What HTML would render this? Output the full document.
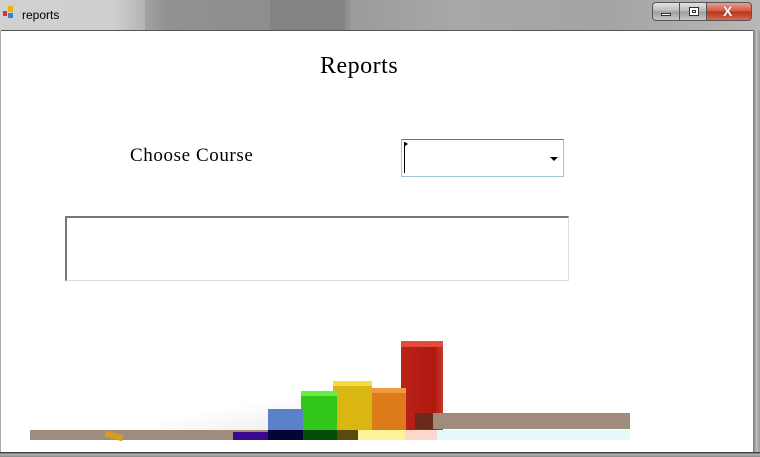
<!DOCTYPE html>
<html><head><meta charset="utf-8"><style>
*{margin:0;padding:0;box-sizing:border-box}
body{width:760px;height:457px;overflow:hidden;position:relative;background:#a9a9a9;font-family:"Liberation Sans",sans-serif}
.tb{position:absolute;left:0;top:0;width:760px;height:31px;background:linear-gradient(90deg,#d0d0d0 0%,#cfcfcf 15%,#a0a0a0 22%,#9a9a9a 45%,#a8a8a8 60%,#a4a4a4 80%,#b8b8b8 100%)}
.ghost{position:absolute;top:0;height:30px;background:rgba(60,60,60,.15)}
.client{position:absolute;left:1px;top:30px;width:752px;height:422px;background:#fff;border-top:1px solid #555}
.frameR{position:absolute;left:753px;top:30px;width:7px;height:427px;background:linear-gradient(90deg,#777,#c0c0c0,#9a9a9a)}
.frameB{position:absolute;left:0;top:452px;width:760px;height:5px;background:linear-gradient(180deg,#444 0,#444 1px,#b5b5b5 2px,#888 5px)}
.btn{position:absolute;top:2px;height:19px;border:1px solid #555;background:linear-gradient(#e4e4e4,#b5b5b5 50%,#9d9d9d 51%,#c6c6c6)}
.abs{position:absolute}
</style></head><body>
<div class="tb"></div>
<div class="ghost" style="left:145px;width:200px"></div>
<div class="ghost" style="left:270px;width:80px;background:rgba(70,70,70,.12)"></div>
<div class="abs" style="left:3px;top:11px;width:4px;height:5px;background:#d33"></div>
<div class="abs" style="left:8px;top:6px;width:5px;height:6px;background:#f0b400"></div>
<div class="abs" style="left:8px;top:13px;width:5px;height:5px;background:#3a7fd5"></div>
<div class="abs" style="left:22px;top:8px;font-size:12px;color:#000">reports</div>
<div class="btn" style="left:652px;width:28px;border-radius:4px 0 0 4px"><div class="abs" style="left:8px;top:10px;width:10px;height:3px;background:#fff;border:1px solid #333"></div></div>
<div class="btn" style="left:679px;width:28px"><div class="abs" style="left:9px;top:4px;width:10px;height:9px;background:#fff;border:1px solid #333"><div style="margin:2px;height:3px;border:1px solid #333"></div></div></div>
<div class="btn" style="left:706px;width:46px;border-radius:0 4px 4px 0;background:linear-gradient(#e8a090,#d0543c 50%,#b8321c 51%,#d86a50)"><div class="abs" style="left:16px;top:0px;font-weight:bold;font-size:14px;color:#fff;text-shadow:0 0 1px #333">X</div></div>
<div class="client"></div>
<div class="frameR"></div>
<div class="frameB"></div>
<div class="abs" style="left:320px;top:53px;font-family:'Liberation Serif',serif;font-size:24px;letter-spacing:0.5px;color:#000">Reports</div>
<div class="abs" style="left:130px;top:145px;font-family:'Liberation Serif',serif;font-size:19px;letter-spacing:0.6px;color:#000">Choose Course</div>
<div class="abs" style="left:401px;top:139px;width:163px;height:38px;border:1px solid #9fc6e0;border-top-color:#4a7aa5;background:#fff">
<div class="abs" style="left:2px;top:2px;width:1px;height:31px;background:#000"></div>
<div class="abs" style="left:3px;top:2px;border-left:3px solid #000;border-top:2px solid transparent;border-bottom:2px solid transparent"></div>
<div class="abs" style="left:148px;top:17px;border-top:4px solid #000;border-left:4px solid transparent;border-right:4px solid transparent"></div>
</div>
<div class="abs" style="left:65px;top:216px;width:504px;height:65px;border:1px solid #ddd;border-top:2px solid #777;border-left:2px solid #777;background:#fff"></div>
<!-- chart -->
<div class="abs" style="left:160px;top:395px;width:240px;height:35px;background:linear-gradient(170deg,#fff 30%,#e6e6e6 100%)"></div>
<div class="abs" style="left:401px;top:341px;width:42px;height:89px;background:linear-gradient(90deg,#b8231a,#b0180e 80%,#c8382c)"></div>
<div class="abs" style="left:401px;top:341px;width:42px;height:6px;background:#e24a3c"></div>
<div class="abs" style="left:371px;top:388px;width:35px;height:42px;background:#dd7a1a"></div>
<div class="abs" style="left:371px;top:388px;width:35px;height:5px;background:#f09a40"></div>
<div class="abs" style="left:333px;top:381px;width:39px;height:49px;background:#d9b612"></div>
<div class="abs" style="left:333px;top:381px;width:39px;height:5px;background:#f5dd40"></div>
<div class="abs" style="left:301px;top:391px;width:36px;height:39px;background:#33c61c"></div>
<div class="abs" style="left:301px;top:391px;width:36px;height:5px;background:#66ee44"></div>
<div class="abs" style="left:268px;top:409px;width:35px;height:21px;background:#5a82c8"></div>
<div class="abs" style="left:433px;top:413px;width:197px;height:16px;background:#a08c7d"></div>
<div class="abs" style="left:415px;top:413px;width:18px;height:16px;background:#6b2a1c"></div>
<div class="abs" style="left:30px;top:430px;width:600px;height:10px;background:#a08c7d"></div>
<div class="abs" style="left:233px;top:432px;width:35px;height:8px;background:#3a0890"></div>
<div class="abs" style="left:268px;top:430px;width:35px;height:10px;background:#050535"></div>
<div class="abs" style="left:303px;top:430px;width:34px;height:10px;background:#064d0a"></div>
<div class="abs" style="left:337px;top:430px;width:21px;height:10px;background:#5a4a10"></div>
<div class="abs" style="left:358px;top:430px;width:47px;height:10px;background:#fdf39a"></div>
<div class="abs" style="left:405px;top:430px;width:32px;height:10px;background:#fdd8cc"></div>
<div class="abs" style="left:437px;top:430px;width:193px;height:10px;background:#e4fafa"></div>
<div class="abs" style="left:105px;top:433px;width:18px;height:6px;background:#d89a20;transform:rotate(15deg)"></div>
</body></html>
